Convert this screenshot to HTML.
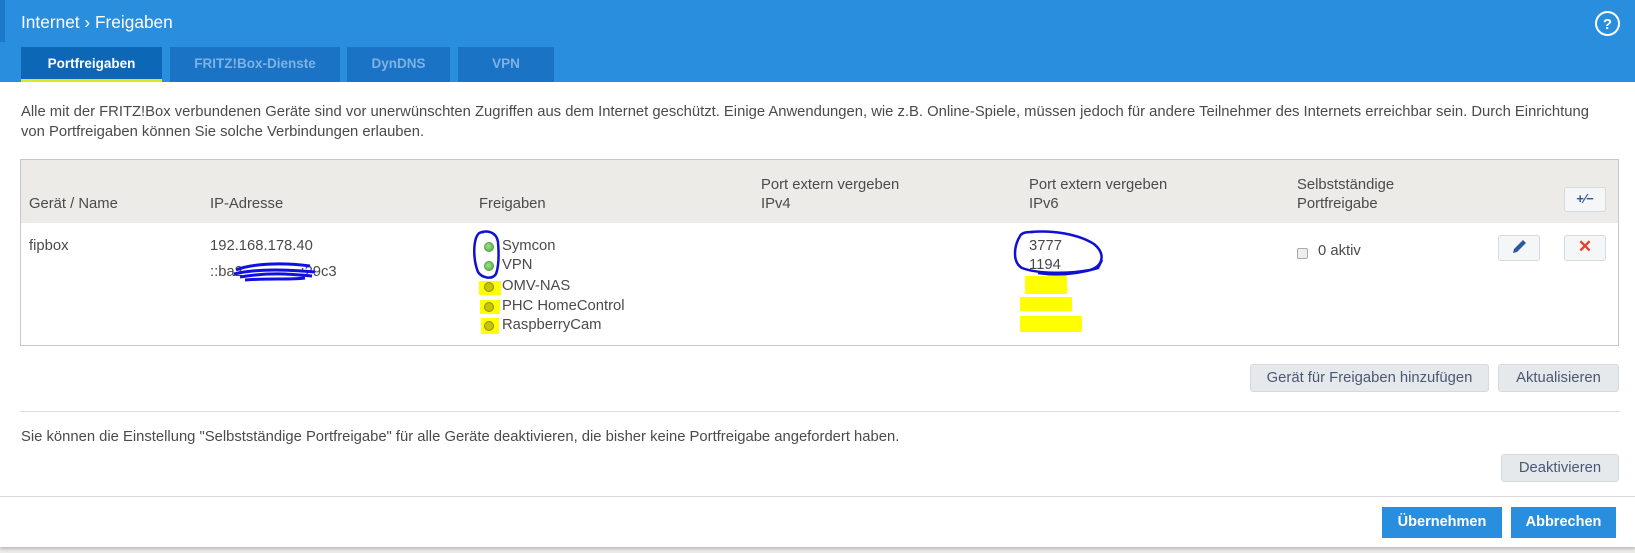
<!DOCTYPE html>
<html><head><meta charset="utf-8"><style>
*{margin:0;padding:0;box-sizing:border-box}
body{width:1635px;height:553px;background:#ecebe6;font-family:"Liberation Sans",sans-serif;color:#4a4a4a;position:relative;overflow:hidden;font-size:14.8px}
.a{position:absolute;white-space:nowrap}
#page{position:absolute;left:0;top:0;width:1635px;height:547px;background:#fff;box-shadow:0 2px 3px #bbb}
#hdr{position:absolute;left:0;top:0;width:1635px;height:82px;background:#2a8ede}
.tab{position:absolute;top:47px;height:35px;background:#1a73c4;color:#7fb2e4;font-weight:bold;font-size:13.5px;text-align:center;line-height:33px}
.tab.on{background:#0c67b6;color:#fff;border-bottom:3px solid #dbe81f}
.btn{position:absolute;background:#e6e9ec;border:1px solid #d6d9de;border-radius:3px;color:#4a5775;font-size:14.8px;text-align:center}
.bb{position:absolute;background:#2a8ede;color:#fff;font-weight:bold;font-size:14.5px;text-align:center;line-height:31px}
.dot{position:absolute;width:10px;height:10px;border-radius:50%}
.g{background:radial-gradient(circle at 40% 40%,#9de08a,#4caf3a);border:1px solid #5a9a4a}
.y{background:#c8c400;border:1px solid #8a8a20}
.yl{position:absolute;background:#ffff00}
</style></head><body>
<div id="page"></div>
<div id="hdr"></div>
<div class="a" style="left:0;top:0;width:5px;height:42px;background:#1c78c8"></div>
<div class="a" style="left:21px;top:12px;color:#fff;font-size:17.3px">Internet &#x203A; Freigaben</div>
<svg class="a" style="left:1594px;top:10px" width="27" height="27"><circle cx="13.5" cy="13.5" r="11.5" fill="none" stroke="#fff" stroke-width="2"/><text x="13.5" y="19" font-family="Liberation Sans" font-weight="bold" font-size="15" fill="#fff" text-anchor="middle">?</text></svg>
<div class="tab on" style="left:21px;width:141px">Portfreigaben</div>
<div class="tab" style="left:170px;width:170px">FRITZ!Box-Dienste</div>
<div class="tab" style="left:347px;width:103px">DynDNS</div>
<div class="tab" style="left:458px;width:96px">VPN</div>

<div class="a" style="left:21px;top:104px">Alle mit der FRITZ!Box verbundenen Geräte sind vor unerwünschten Zugriffen aus dem Internet geschützt. Einige Anwendungen, wie z.B. Online-Spiele, müssen jedoch für andere Teilnehmer des Internets erreichbar sein. Durch Einrichtung</div>
<div class="a" style="left:21px;top:124px">von Portfreigaben können Sie solche Verbindungen erlauben.</div>

<div class="a" style="left:20px;top:159px;width:1599px;height:187px;border:1px solid #c8c8c8"></div>
<div class="a" style="left:21px;top:160px;width:1597px;height:63px;background:#ecebe7"></div>
<div class="a" style="left:29px;top:196px">Gerät / Name</div>
<div class="a" style="left:210px;top:196px">IP-Adresse</div>
<div class="a" style="left:479px;top:196px">Freigaben</div>
<div class="a" style="left:761px;top:177px">Port extern vergeben</div>
<div class="a" style="left:761px;top:196px">IPv4</div>
<div class="a" style="left:1029px;top:177px">Port extern vergeben</div>
<div class="a" style="left:1029px;top:196px">IPv6</div>
<div class="a" style="left:1297px;top:177px">Selbstständige</div>
<div class="a" style="left:1297px;top:196px">Portfreigabe</div>
<div class="btn" style="left:1564px;top:187px;width:42px;height:25px;background:#f5f6f7;color:#2a5a9a;font-weight:bold;font-size:13px;line-height:22px">+⁄−</div>

<div class="a" style="left:29px;top:238px">fipbox</div>
<div class="a" style="left:210px;top:238px">192.168.178.40</div>
<div class="a" style="left:210px;top:264px">::ba2&nbsp;&nbsp;&nbsp;&nbsp;&nbsp;&nbsp;&nbsp;&nbsp;&nbsp;&nbsp;&nbsp;&nbsp;&nbsp;&nbsp;:29c3</div>
<svg class="a" style="left:230px;top:258px" width="90" height="24"><path d="M6 12 C20 6,50 4,80 8 M4 16 C30 10,60 12,85 14 M10 19 C40 14,60 16,82 18 M15 22 C40 20,60 22,75 20" stroke="#1010e0" stroke-width="3" fill="none"/></svg>

<div class="yl" style="left:479px;top:281px;width:22px;height:14px"></div>
<div class="yl" style="left:480px;top:300px;width:20px;height:14px"></div>
<div class="yl" style="left:481px;top:318px;width:18px;height:16px"></div>
<div class="dot g" style="left:484px;top:242px"></div>
<div class="dot g" style="left:484px;top:261px"></div>
<div class="dot y" style="left:484px;top:282px"></div>
<div class="dot y" style="left:484px;top:302px"></div>
<div class="dot y" style="left:484px;top:321px"></div>
<svg class="a" style="left:470px;top:228px" width="35" height="55"><path d="M12 4 C20 2,27 6,28 14 C29 26,29 38,26 46 C22 52,12 50,8 44 C4 34,3 20,6 10 C8 5,10 4,14 4" stroke="#1010d0" stroke-width="2.5" fill="none"/></svg>
<div class="a" style="left:502px;top:238px">Symcon</div>
<div class="a" style="left:502px;top:257px">VPN</div>
<div class="a" style="left:502px;top:278px">OMV-NAS</div>
<div class="a" style="left:502px;top:298px">PHC HomeControl</div>
<div class="a" style="left:502px;top:317px">RaspberryCam</div>

<div class="a" style="left:1029px;top:238px">3777</div>
<div class="a" style="left:1029px;top:257px">1194</div>
<div class="yl" style="left:1025px;top:276px;width:42px;height:18px"></div>
<div class="yl" style="left:1020px;top:297px;width:52px;height:14px"></div>
<div class="yl" style="left:1020px;top:316px;width:62px;height:16px"></div>
<svg class="a" style="left:1008px;top:228px" width="100" height="60"><path d="M22 4 C45 2,70 6,86 16 C98 26,95 38,82 42 C60 46,30 46,14 40 C4 34,6 18,12 8 C14 4,20 4,26 4 M30 45 C50 48,70 46,90 40 L94 32" stroke="#1010d0" stroke-width="2.5" fill="none"/></svg>

<div class="a" style="left:1297px;top:248px;width:11px;height:11px;border:1px solid #aaa;border-radius:2px;background:#eee"></div>
<div class="a" style="left:1318px;top:243px">0 aktiv</div>
<div class="btn" style="left:1498px;top:235px;width:42px;height:26px;background:#f5f6f7"><svg width="40" height="24"><path d="M14 17 L15 13 L24 4 L27 7 L18 16 Z" fill="#2c5aa0"/></svg></div>
<div class="btn" style="left:1564px;top:235px;width:42px;height:26px;background:#f5f6f7;color:#e8402a;font-size:17px;font-weight:bold;line-height:22px">✕</div>

<div class="btn" style="left:1250px;top:364px;width:239px;height:28px;line-height:26px">Gerät für Freigaben hinzufügen</div>
<div class="btn" style="left:1498px;top:364px;width:121px;height:28px;line-height:26px">Aktualisieren</div>
<div class="a" style="left:20px;top:411px;width:1600px;height:1px;background:#ddd"></div>
<div class="a" style="left:21px;top:429px">Sie können die Einstellung "Selbstständige Portfreigabe" für alle Geräte deaktivieren, die bisher keine Portfreigabe angefordert haben.</div>
<div class="btn" style="left:1501px;top:454px;width:118px;height:28px;line-height:26px">Deaktivieren</div>
<div class="a" style="left:0;top:496px;width:1635px;height:1px;background:#d8d8d8"></div>
<div class="bb" style="left:1382px;top:507px;width:120px;height:31px">Übernehmen</div>
<div class="bb" style="left:1511px;top:507px;width:105px;height:31px">Abbrechen</div>
</body></html>
